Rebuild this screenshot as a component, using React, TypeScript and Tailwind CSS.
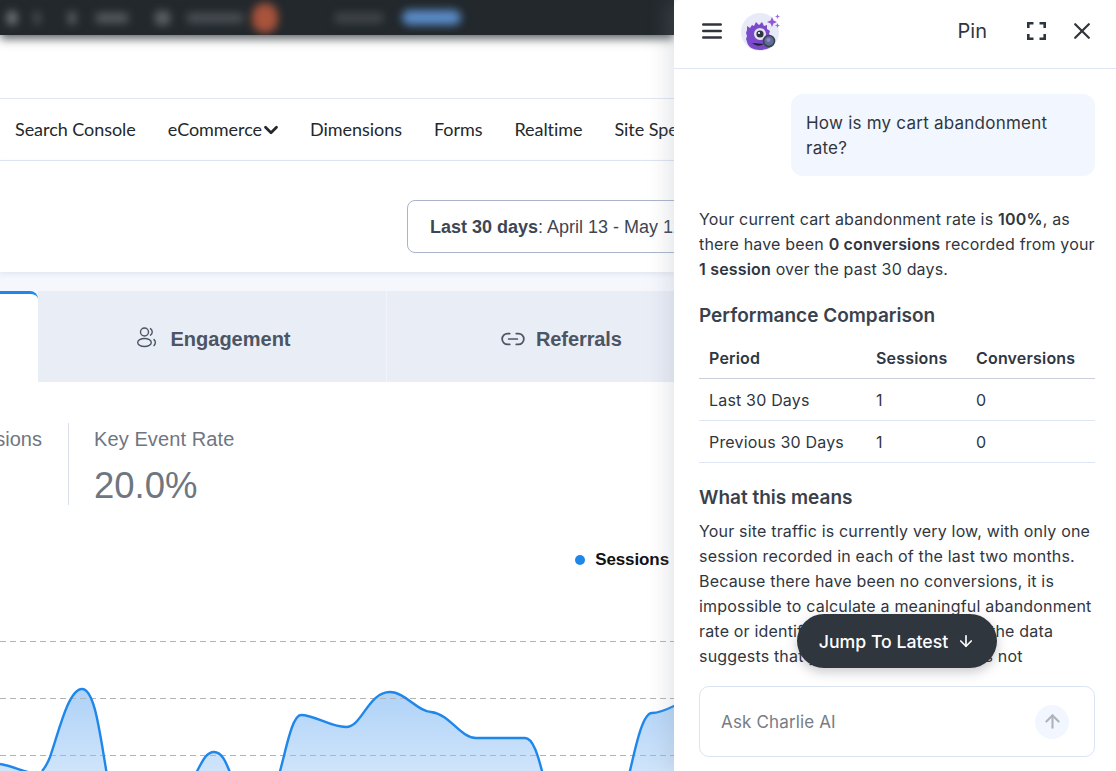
import React from "react";
import { ArrowDown, ArrowUp, ChevronDown, Link2 } from "lucide-react";

function Logo() {
  return (
    <svg width="42" height="40" viewBox="0 0 42 40" className="shrink-0 overflow-visible">
      <circle cx="19" cy="21" r="19" fill="#e8ebf7" />
      <path d="M6 15l3 2 2-3 2 1 2-4 3 3 3-3 2 4 3-1 0 4 3 2-1 3 2 3-1 4 1 4C32 36 26 39 19 39C12 39 7 36 6 31l-1-3 1-3-1-3 1-3z" fill="#7b4aca" />
      <circle cx="19" cy="23" r="6" fill="#e6e3f2" />
      <circle cx="19" cy="23" r="3.6" fill="#2b3440" />
      <circle cx="18" cy="22" r="1.1" fill="#ffffff" />
      <path d="M11 32q6 5 12 1z" fill="#20232b" />
      <circle cx="28" cy="30" r="5.5" fill="#5f6f94" stroke="#3b4352" strokeWidth="1.6" />
      <circle cx="27.5" cy="29" r="2" fill="#9a80d8" />
      <path d="M31 6l1.4 3.6L36 11l-3.6 1.4L31 16l-1.4-3.6L26 11l3.6-1.4z" fill="#9355d6" />
      <path d="M36.5 3l.7 1.8 1.8.7-1.8.7-.7 1.8-.7-1.8-1.8-.7 1.8-.7z" fill="#a56be0" />
      <path d="M36.5 12l.7 1.8 1.8.7-1.8.7-.7 1.8-.7-1.8-1.8-.7 1.8-.7z" fill="#a56be0" />
    </svg>
  );
}

function MenuIcon() {
  return (
    <svg width="20" height="16" viewBox="0 0 20 16" fill="none" stroke="#2f353d" strokeWidth="2.4" strokeLinecap="round" className="shrink-0">
      <path d="M1.2 1.5H18.8M1.2 8H18.8M1.2 14.5H18.8" />
    </svg>
  );
}

function CloseIcon() {
  return (
    <svg width="16" height="16" viewBox="0 0 16 16" fill="none" stroke="#2f353d" strokeWidth="2.2" strokeLinecap="round" className="shrink-0">
      <path d="M1.2 1.2L14.8 14.8M14.8 1.2L1.2 14.8" />
    </svg>
  );
}

function FullscreenIcon() {
  return (
    <svg width="19" height="18" viewBox="0 0 19 18" fill="none" stroke="#2f353d" strokeWidth="2.6" className="shrink-0">
      <path d="M1.3 6V1.3H6.5M12.5 1.3H17.7V6M17.7 12V16.7H12.5M6.5 16.7H1.3V12" />
    </svg>
  );
}

function PeopleIcon() {
  return (
    <svg width="22" height="22" viewBox="0 0 22 22" fill="none" stroke="#4b5563" strokeWidth="1.4" strokeLinecap="round">
      <circle cx="8.5" cy="6" r="4" />
      <ellipse cx="8.5" cy="16.5" rx="6.8" ry="4" />
      <path d="M14.5 2.6a4 4 0 0 1 0 6.6M18 13.6a4 4 0 0 1 0 6" />
    </svg>
  );
}

function Chart() {
  const area =
    "M0 764C12 766 22 771 32 773C36 773 39 771 42 771C46 767 48 762 50 757C58 735 68 689 82 689C95 689 100 735 107 775L195 775C202 762 206 752 214 752C222 752 226 762 231 775L279 775C286 750 292 715 301 715C315 715 330 727 346 727C362 727 368 692 390 692C405 692 418 712 431 712C450 714 460 738 476 738L525 738C533 738 538 755 543 775L629 775C635 750 642 713 652 713C660 713 668 709 676 705L676 775L0 775Z";
  return (
    <svg width="676" height="175" viewBox="0 600 676 175" className="block mt-[23px] shrink-0">
      <defs>
        <linearGradient id="fillBlue" gradientUnits="userSpaceOnUse" x1="0" y1="689" x2="0" y2="771">
          <stop offset="0" stopColor="#aed2f7" />
          <stop offset="1" stopColor="#cfe4fb" />
        </linearGradient>
      </defs>
      <path d={area} fill="url(#fillBlue)" stroke="none" />
      <g stroke="#b3b3b3" strokeWidth="1.2" strokeDasharray="6 4">
        <path d="M0 641.5H676M0 698.5H676M0 755.5H676" />
      </g>
      <path
        d="M0 764C12 766 22 771 32 773M42 771C46 767 48 762 50 757C58 735 68 689 82 689C95 689 100 735 107 775M195 775C202 762 206 752 214 752C222 752 226 762 231 775M279 775C286 750 292 715 301 715C315 715 330 727 346 727C362 727 368 692 390 692C405 692 418 712 431 712C450 714 460 738 476 738L525 738C533 738 538 755 543 775M629 775C635 750 642 713 652 713C660 713 668 709 676 705"
        fill="none"
        stroke="#1f87ea"
        strokeWidth="2.4"
      />
    </svg>
  );
}

function Dashboard() {
  const nav = ["Search Console", "eCommerce", "Dimensions", "Forms", "Realtime", "Site Speed"];
  return (
    <div className="w-[674px] h-full shrink-0 overflow-hidden flex flex-col bg-white font-['Liberation_Sans',sans-serif]">
      <div className="relative z-10 h-[35px] shrink-0 bg-[#22282c] shadow-[0_4px_9px_rgba(30,35,40,0.7)] overflow-hidden flex items-center">
        <div className="flex items-center blur-[4px]">
          <div className="w-[10px] h-[14px] ml-[7px] rounded-full bg-[#777b80]" />
          <div className="w-[6px] h-[12px] ml-[17px] bg-[#50555a]" />
          <div className="w-[8px] h-[12px] ml-[28px] bg-[#5c6166]" />
          <div className="w-[32px] h-[10px] ml-[20px] bg-[#565b60]" />
          <div className="w-[15px] h-[14px] ml-[27px] rounded bg-[#5c6166]" />
          <div className="w-[56px] h-[10px] ml-[17px] bg-[#4b5055]" />
          <div className="w-[26px] h-[30px] ml-[9px] rounded-full bg-[#a9533b]" />
          <div className="w-[48px] h-[10px] ml-[57px] bg-[#41464b]" />
          <div className="w-[59px] h-[15px] ml-[19px] rounded-full bg-[#5a8bc8]" />
        </div>
      </div>
      <div className="h-[63px] shrink-0" />
      <nav className="h-[63px] shrink-0 border-y border-[#dfe6f3] flex items-center gap-[32px] pl-[15px] whitespace-nowrap overflow-hidden text-[18px] tracking-[-0.05px] text-[#23282d] font-['Lato',sans-serif]">
        {nav.map((n) => (
          <span key={n} className="flex items-center">
            {n}
            {n === "eCommerce" && <ChevronDown size={22} strokeWidth={3} className="ml-[-2px] mr-[-4px]" />}
          </span>
        ))}
      </nav>
      <div className="h-[111px] shrink-0 flex items-start pl-[407px] pt-[39px] whitespace-nowrap shadow-[0_2px_5px_rgba(200,208,225,0.45)] relative">
        <div className="h-[53px] w-[320px] shrink-0 border-[1.5px] border-[#a9b4cb] rounded-[8px] flex items-center pl-[22px] pt-[1px] text-[18px] text-[#3d4654]">
          <b className="font-bold">Last 30 days</b>: April 13 - May 12, 2025
        </div>
      </div>
      <div className="h-[110px] shrink-0 bg-[#f5f7fd] pt-[19px] flex">
        <div className="w-[38px] shrink-0 bg-white border-t-[3px] border-[#1f87ea] rounded-tr-[8px]" />
        <div className="w-[349px] shrink-0 bg-[#e9edf6] border-r border-[#f2f4fa] flex items-center justify-center gap-[12px] pl-[3px]">
          <PeopleIcon />
          <span className="text-[20px] font-bold text-[#4b5563] mt-[4px]">Engagement</span>
        </div>
        <div className="w-[348px] shrink-0 bg-[#e9edf6] flex items-center pl-[113px] pt-[4px] gap-[10px]">
          <Link2 size={26} strokeWidth={1.6} color="#4b5563" />
          <span className="text-[20px] font-bold text-[#4b5563] tracking-[-0.1px]">Referrals</span>
        </div>
      </div>
      <div className="h-[170px] shrink-0 pt-[41px] flex items-start">
        <div className="w-[69px] h-[82px] shrink-0 border-r border-[#d9dfeb] overflow-hidden flex justify-end pr-[26px] text-[20px] text-[#6f7680]">
          <span className="mt-[3px] leading-[26px]">sions</span>
        </div>
        <div className="pl-[25px]">
          <div className="text-[20px] leading-[26px] mt-[3px] text-[#6f7680] tracking-[0.1px]">Key Event Rate</div>
          <div className="text-[36.5px] leading-[42px] mt-[13px] text-[#6f7680]">20.0%</div>
        </div>
      </div>
      <div className="h-[34px] shrink-0 flex items-center justify-end gap-[10px] pr-[5px] mt-[-9px]">
        <span className="w-[10px] h-[10px] rounded-full bg-[#1f87ea]" />
        <span className="text-[17px] font-bold text-[#111111] tracking-[-0.1px]">Sessions</span>
      </div>
      <Chart />
    </div>
  );
}

function Panel() {
  const rows = [
    ["Last 30 Days", "1", "0"],
    ["Previous 30 Days", "1", "0"],
  ];
  return (
    <aside className="relative z-20 w-[442px] h-full shrink-0 bg-white rounded-tl-[6px] shadow-[-8px_0_20px_rgba(140,145,160,0.2)] flex flex-col font-['Inter',sans-serif] text-[16px] leading-[25px] tracking-[0.18px] text-[#30363f]">
      <header className="h-[69px] shrink-0 border-b border-[#dfe6f3] flex items-center pl-[28px] pr-[26px] pb-[6px]">
        <MenuIcon />
        <div className="ml-[19px] mt-[-1px]"><Logo /></div>
        <span className="ml-auto mr-[40px] text-[20px] tracking-normal font-normal text-[#30363f]">Pin</span>
        <FullscreenIcon />
        <div className="ml-[28px]"><CloseIcon /></div>
      </header>
      <div className="relative flex-1 overflow-hidden">
        <div className="pl-[25px] pr-[21px]">
          <div className="ml-[92px] mt-[25px] h-[82px] bg-[#f2f6fe] rounded-[12px] px-[15px] py-[17px] text-[17px] tracking-[0.23px]">
            How is my cart abandonment rate?
          </div>
          <p className="mt-[31px] whitespace-nowrap">
            Your current cart abandonment rate is <b className="font-semibold">100%</b>, as<br />
            there have been <b className="font-semibold">0 conversions</b> recorded from your<br />
            <b className="font-semibold">1 session</b> over the past 30 days.
          </p>
          <h3 className="mt-[20px] text-[19px] tracking-normal leading-[28px] font-semibold text-[#3a414b]">Performance Comparison</h3>
          <table className="mt-[6px] w-full border-collapse text-left">
            <thead>
              <tr className="h-[42px] border-b border-[#c9d0dc]">
                <th className="pl-[10px] pt-[4px] font-semibold w-[177px]">Period</th>
                <th className="pt-[4px] font-semibold w-[100px]">Sessions</th>
                <th className="pt-[4px] font-semibold">Conversions</th>
              </tr>
            </thead>
            <tbody>
              {rows.map((r) => (
                <tr key={r[0]} className="h-[42px] border-b border-[#dfe6f3]">
                  <td className="pl-[10px] pt-[2px]">{r[0]}</td>
                  <td className="pt-[2px]">{r[1]}</td>
                  <td className="pt-[2px]">{r[2]}</td>
                </tr>
              ))}
            </tbody>
          </table>
          <h3 className="mt-[21px] text-[19px] tracking-normal leading-[28px] font-semibold text-[#3a414b]">What this means</h3>
          <p className="mt-[7px] whitespace-nowrap">
            Your site traffic is currently very low, with only one<br />
            session recorded in each of the last two months.<br />
            Because there have been no conversions, it is<br />
            impossible to calculate a meaningful abandonment<br />
            rate or identify any useful trends, but the data<br />
            suggests that your traffic level itself is not
          </p>
        </div>
      </div>
      <div className="absolute left-[123px] top-[614px] w-[200px] h-[54px] rounded-full bg-[#30363e] shadow-[0_4px_12px_rgba(40,45,55,0.25)] flex items-center justify-center gap-[9px] text-white font-medium text-[17.7px] tracking-normal">
        Jump To Latest
        <ArrowDown size={18} strokeWidth={2.2} />
      </div>
      <div className="h-[85px] shrink-0 pl-[25px] pr-[21px] bg-white">
        <div className="h-[71px] border border-[#dbe4f3] rounded-[10px] flex items-center justify-between pl-[21px] pr-[25px]">
          <span className="text-[#767c86] text-[17px] tracking-[0.15px] mt-[1px]">Ask Charlie AI</span>
          <span className="w-[34px] h-[34px] rounded-full bg-[#f2f6fe] flex items-center justify-center">
            <ArrowUp size={21} strokeWidth={2.4} color="#aeb3bb" />
          </span>
        </div>
      </div>
    </aside>
  );
}

export default function App() {
  return (
    <div className="w-[1116px] h-[771px] flex overflow-hidden bg-white relative">
      <Dashboard />
      <Panel />
    </div>
  );
}
